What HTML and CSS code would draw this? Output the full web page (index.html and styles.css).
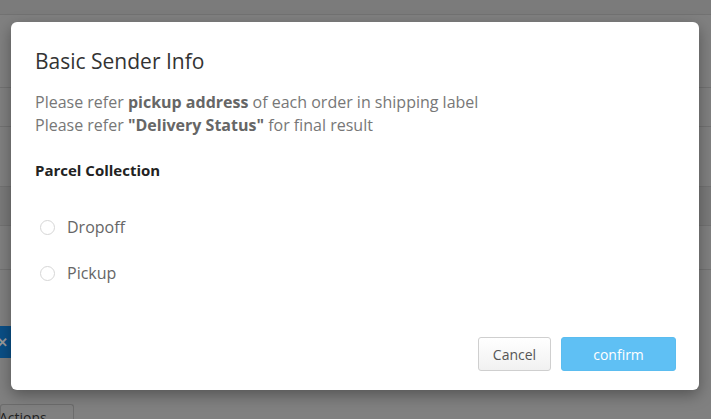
FILE: index.html
```html
<!DOCTYPE html>
<html>
<head>
<meta charset="utf-8">
<link rel="stylesheet" href="styles.css">
</head>
<body>
<div class="page">
  <div class="row r1"></div>
  <div class="row r2"></div>
  <div class="row r3"></div>
  <div class="row r4"></div>
  <div class="row r5 dark"></div>
  <div class="row r6"></div>
  <div class="row r7"></div>
  <div class="bluebar"><span class="x">✕</span></div>
  <div class="spacer"></div>
  <div class="actions">Actions</div>
</div>
<div class="modal">
  <h1 class="title">Basic Sender Info</h1>
  <div class="info">
    <p>Please refer <b>pickup address</b> of each order in shipping label</p>
    <p>Please refer <b>"Delivery Status"</b> for final result</p>
  </div>
  <h2 class="section">Parcel Collection</h2>
  <label class="option"><span class="radio"></span>Dropoff</label>
  <label class="option"><span class="radio"></span>Pickup</label>
  <div class="footer">
    <button class="btn cancel">Cancel</button>
    <button class="btn confirm">confirm</button>
  </div>
</div>
</body>
</html>
```
FILE: styles.css
```css
html, body {
  margin: 0;
  padding: 0;
  height: 100%;
  overflow: hidden;
}
body {
  background: #808080;
  font-family: "Open Sans", "Liberation Sans", sans-serif;
}
.page {
  display: flex;
  flex-direction: column;
  height: 419px;
}
.row {
  border-bottom: 1px solid #727272;
  flex: none;
}
.r1 { height: 14px; background: #7b7b7b; }
.r2 { height: 72px; }
.r3 { height: 38px; }
.r4 { height: 59px; }
.r5 { height: 38px; background: #7a7a7a; }
.r6 { height: 43px; }
.r7 { height: 40px; border-bottom: none; }
.bluebar {
  flex: none;
  margin-top: 16px;
  height: 32px;
  width: 40px;
  background: #0a4f86;
  display: flex;
  align-items: center;
  color: #9a9a9a;
  font-size: 13px;
  font-weight: 700;
}
.x { margin-left: -3px; }
.spacer { flex: 1; }
.actions {
  flex: none;
  width: 72px;
  height: 18px;
  margin-bottom: -4px;
  border: 1px solid #6c6c6c;
  border-bottom: none;
  border-radius: 3px 3px 0 0;
  font-size: 14px;
  color: #222;
  text-indent: -2px;
  line-height: 26px;
  overflow: hidden;
  background: #808080;
}
.modal {
  position: absolute;
  left: 11px;
  top: 22px;
  width: 688px;
  height: 368px;
  box-sizing: border-box;
  background: #fff;
  border-radius: 6px;
  box-shadow: 0 5px 15px rgba(0,0,0,0.35);
  padding: 25px 23px 19px 24px;
  display: flex;
  flex-direction: column;
}
.title {
  margin: 0;
  font-size: 21px;
  font-weight: 400;
  line-height: 28px;
  color: #333;
}
.info {
  margin-top: 16px;
  font-size: 16px;
  line-height: 23px;
  color: #777;
}
.info p { margin: 0; }
.info b { color: #666; font-weight: 700; }
.section {
  margin: 23px 0 0;
  font-size: 15px;
  font-weight: 700;
  line-height: 20px;
  color: #222;
}
.option {
  display: flex;
  align-items: center;
  gap: 12px;
  font-size: 16px;
  color: #666;
  height: 24px;
  padding-left: 5px;
}
.section + .option { margin-top: 35px; }
.option + .option { margin-top: 22px; }
.radio {
  width: 15px;
  height: 15px;
  box-sizing: border-box;
  border: 1px solid #d6d6d6;
  border-radius: 50%;
  background: #fff;
}
.footer {
  margin-top: auto;
  display: flex;
  justify-content: flex-end;
  gap: 10px;
}
.btn {
  height: 34px;
  font-family: "Open Sans", "Liberation Sans", sans-serif;
  font-size: 14px;
  border-radius: 3px;
  padding: 0;
}
.cancel {
  width: 73px;
  border: 1px solid #cfcfcf;
  background: linear-gradient(#ffffff, #f1f1f1);
  color: #555;
}
.confirm {
  width: 115px;
  border: 1px solid #5bbdf0;
  background: #5fc0f4;
  color: #fff;
}
```
